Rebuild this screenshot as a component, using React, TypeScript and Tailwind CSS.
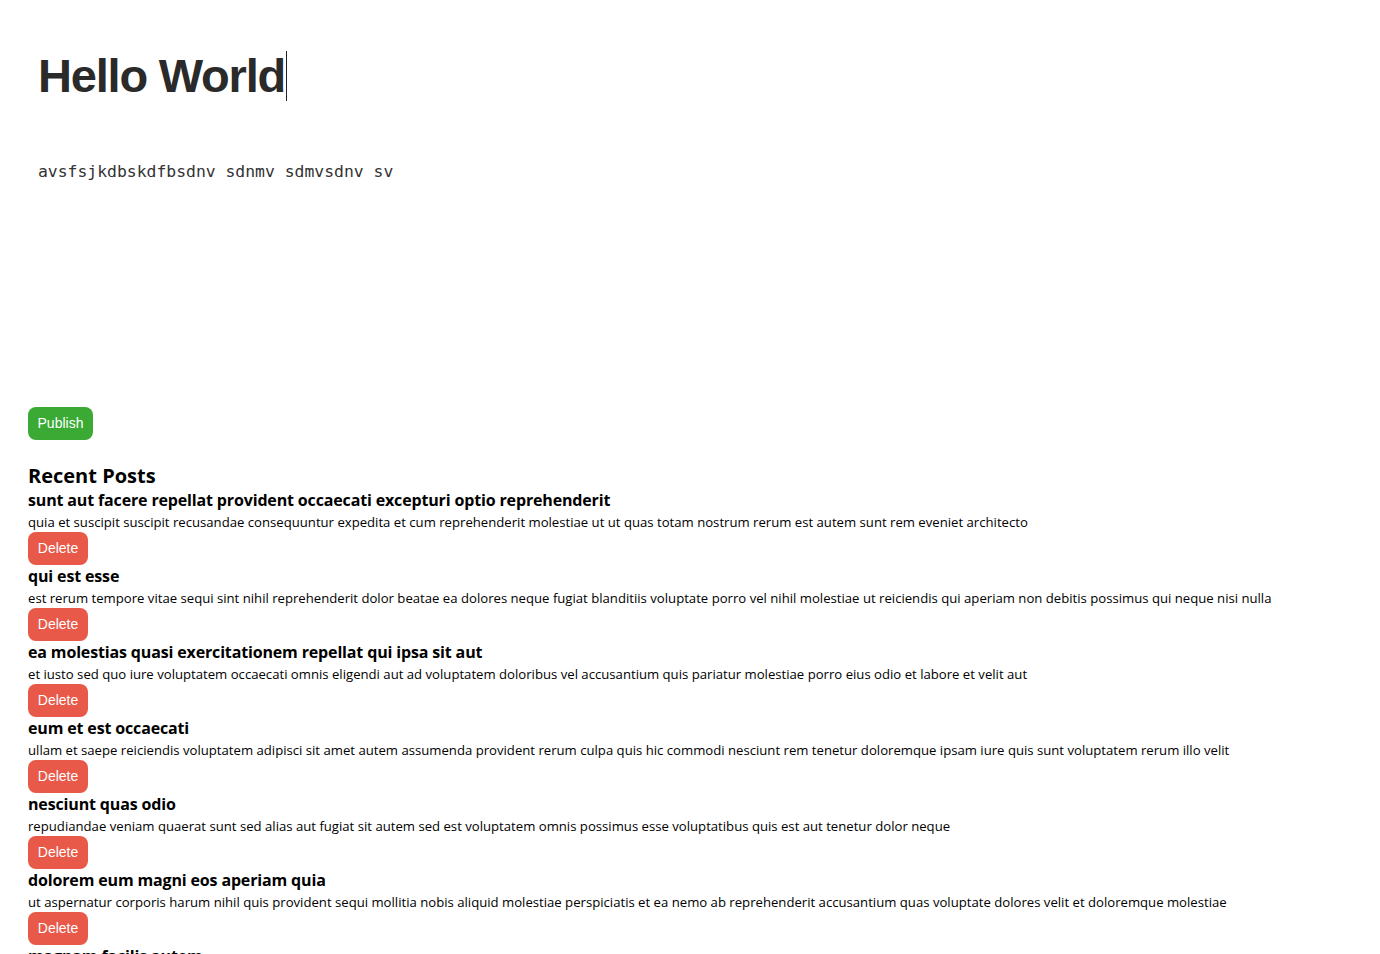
import React from "react";

const posts = [
  {
    title: "sunt aut facere repellat provident occaecati excepturi optio reprehenderit",
    body: "quia et suscipit suscipit recusandae consequuntur expedita et cum reprehenderit molestiae ut ut quas totam nostrum rerum est autem sunt rem eveniet architecto",
  },
  {
    title: "qui est esse",
    body: "est rerum tempore vitae sequi sint nihil reprehenderit dolor beatae ea dolores neque fugiat blanditiis voluptate porro vel nihil molestiae ut reiciendis qui aperiam non debitis possimus qui neque nisi nulla",
  },
  {
    title: "ea molestias quasi exercitationem repellat qui ipsa sit aut",
    body: "et iusto sed quo iure voluptatem occaecati omnis eligendi aut ad voluptatem doloribus vel accusantium quis pariatur molestiae porro eius odio et labore et velit aut",
  },
  {
    title: "eum et est occaecati",
    body: "ullam et saepe reiciendis voluptatem adipisci sit amet autem assumenda provident rerum culpa quis hic commodi nesciunt rem tenetur doloremque ipsam iure quis sunt voluptatem rerum illo velit",
  },
  {
    title: "nesciunt quas odio",
    body: "repudiandae veniam quaerat sunt sed alias aut fugiat sit autem sed est voluptatem omnis possimus esse voluptatibus quis est aut tenetur dolor neque",
  },
  {
    title: "dolorem eum magni eos aperiam quia",
    body: "ut aspernatur corporis harum nihil quis provident sequi mollitia nobis aliquid molestiae perspiciatis et ea nemo ab reprehenderit accusantium quas voluptate dolores velit et doloremque molestiae",
  },
  {
    title: "magnam facilis autem",
    body: "dolore placeat quibusdam ea quo vitae magni quis enim qui quis quo nemo aut saepe quidem repellat excepturi ut quia sunt ut sequi eos ea sed quas",
  },
];

export default function App() {
  return (
    <div className="min-h-screen bg-white px-[28px] text-black">
      <div className="h-[407px] pl-[10px] pt-[51px]">
        <h1 className="flex h-[50px] items-center font-['Liberation_Sans',Arial,sans-serif] text-[47px] font-bold leading-[50px] tracking-[-1.2px] text-[#2a2a2a]">
          <span>Hello World</span>
          <span className="ml-[1px] inline-block h-[50px] w-[1px] bg-[#222]" />
        </h1>
        <p className="mt-[59px] font-['DejaVu_Sans_Mono',monospace] text-[16.4px] leading-[24px] text-[#333]">
          avsfsjkdbskdfbsdnv sdnmv sdmvsdnv sv
        </p>
      </div>
      <button className="flex h-[33px] w-[65px] items-center justify-center rounded-[8px] bg-[#3aaa35] font-['Liberation_Sans',Arial,sans-serif] text-[14px] text-white">
        Publish
      </button>
      <div className="font-['Open_Sans','Noto_Sans',sans-serif]">
        <h2 className="mt-[23px] text-[20px] font-bold leading-[26px]">Recent Posts</h2>
        {posts.map((p, i) => (
          <div key={i} className="flex flex-col items-start">
            <h3 className="text-[16px] font-bold leading-[23px] tracking-[-0.15px]">{p.title}</h3>
            <p className="text-[13.15px] leading-[20px]">{p.body}</p>
            <button className="flex h-[33px] w-[60px] items-center justify-center rounded-[8px] bg-[#e8594a] font-['Liberation_Sans',Arial,sans-serif] text-[14px] text-white">
              Delete
            </button>
          </div>
        ))}
      </div>
    </div>
  );
}
